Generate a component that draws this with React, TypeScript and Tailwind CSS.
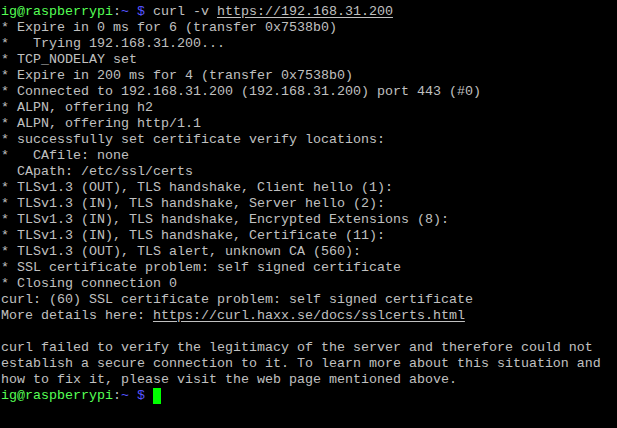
const Prompt = () => (
  <>
    <span className="text-[#55ff55]">ig@raspberrypi</span>
    <span className="text-[#bbbbbb]">:</span>
    <span className="text-[#5555ff]">~ $</span>
  </>
);

const lines = [
  '* Expire in 0 ms for 6 (transfer 0x7538b0)',
  '*   Trying 192.168.31.200...',
  '* TCP_NODELAY set',
  '* Expire in 200 ms for 4 (transfer 0x7538b0)',
  '* Connected to 192.168.31.200 (192.168.31.200) port 443 (#0)',
  '* ALPN, offering h2',
  '* ALPN, offering http/1.1',
  '* successfully set certificate verify locations:',
  '*   CAfile: none',
  '  CApath: /etc/ssl/certs',
  '* TLSv1.3 (OUT), TLS handshake, Client hello (1):',
  '* TLSv1.3 (IN), TLS handshake, Server hello (2):',
  '* TLSv1.3 (IN), TLS handshake, Encrypted Extensions (8):',
  '* TLSv1.3 (IN), TLS handshake, Certificate (11):',
  '* TLSv1.3 (OUT), TLS alert, unknown CA (560):',
  '* SSL certificate problem: self signed certificate',
  '* Closing connection 0',
  'curl: (60) SSL certificate problem: self signed certificate',
];

const help = [
  'curl failed to verify the legitimacy of the server and therefore could not',
  'establish a secure connection to it. To learn more about this situation and',
  'how to fix it, please visit the web page mentioned above.',
];

export default function App() {
  return (
    <div className="w-[617px] h-[428px] overflow-hidden bg-black pt-1 pl-px text-[13.33px] leading-4 text-[#c0c0c0] whitespace-pre font-['Liberation_Mono','Courier_New',monospace]">
      <div>
        <Prompt /> curl -v <span className="underline underline-offset-2">https://192.168.31.200</span>
      </div>
      {lines.map((l, i) => (
        <div key={i}>{l}</div>
      ))}
      <div>
        More details here: <span className="underline underline-offset-2">https://curl.haxx.se/docs/sslcerts.html</span>
      </div>
      <div className="h-4" />
      {help.map((l, i) => (
        <div key={i}>{l}</div>
      ))}
      <div className="flex items-center">
        <Prompt />
        <span> </span>
        <span className="inline-block w-2 h-4 bg-[#00ff00]" />
      </div>
    </div>
  );
}
